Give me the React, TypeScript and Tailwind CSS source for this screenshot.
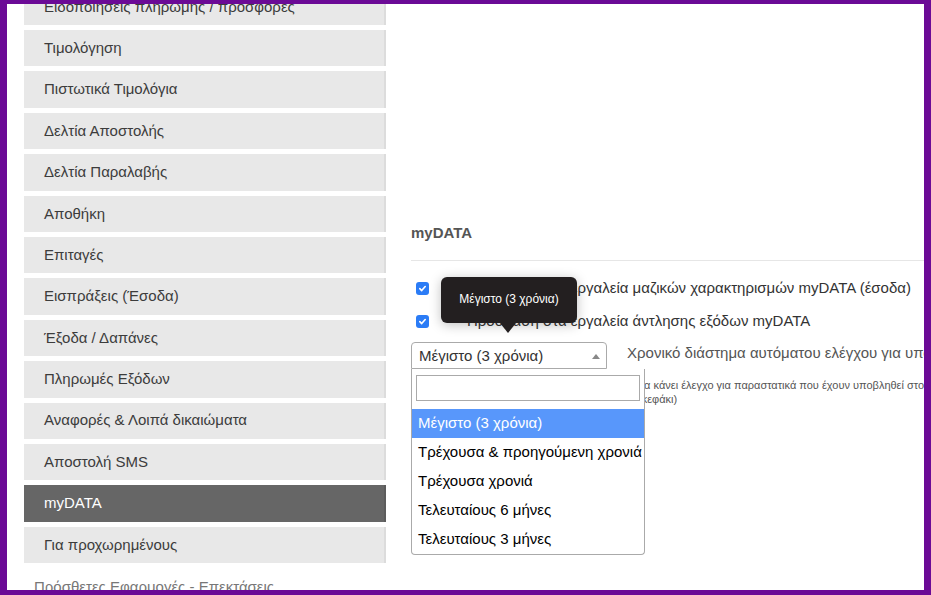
import React from "react";

const items = [
  "Ειδοποιήσεις πληρωμής / προσφορές",
  "Τιμολόγηση",
  "Πιστωτικά Τιμολόγια",
  "Δελτία Αποστολής",
  "Δελτία Παραλαβής",
  "Αποθήκη",
  "Επιταγές",
  "Εισπράξεις (Έσοδα)",
  "Έξοδα / Δαπάνες",
  "Πληρωμές Εξόδων",
  "Αναφορές & Λοιπά δικαιώματα",
  "Αποστολή SMS",
  "myDATA",
  "Για προχωρημένους",
];

const options = [
  "Μέγιστο (3 χρόνια)",
  "Τρέχουσα & προηγούμενη χρονιά",
  "Τρέχουσα χρονιά",
  "Τελευταίους 6 μήνες",
  "Τελευταίους 3 μήνες",
];

function Check() {
  return (
    <span className="flex h-[13px] w-[13px] shrink-0 items-center justify-center rounded-[3px] bg-[#2b7cf6]">
      <svg width="9" height="9" viewBox="0 0 10 10">
        <path d="M2 5.2 L4.1 7.3 L8 2.8" fill="none" stroke="white" strokeWidth="1.8" strokeLinecap="round" strokeLinejoin="round" />
      </svg>
    </span>
  );
}

export default function App() {
  return (
    <div
      className="box-border h-[595px] w-[931px] overflow-hidden border-solid border-[#6b0a96] border-t-[4px] border-b-[5px] border-l-[7px] border-r-[7px] bg-white"
      style={{ fontFamily: '"Liberation Sans", Arial, sans-serif' }}
    >
      <div className="flex h-full pl-[17px]">
        <div className="mt-[-15.4px] flex w-[362px] shrink-0 flex-col">
          {items.map((t) => {
            const active = t === "myDATA";
            return (
              <div
                key={t}
                className={
                  active
                    ? "mb-[5px] flex h-[36.4px] shrink-0 items-center border-r-2 border-[#5c5c5c] bg-[#666666] pl-[20px] text-[15px] text-white"
                    : "mb-[5px] flex h-[36.4px] shrink-0 items-center border-r-2 border-[#dcdcdc] bg-[#e8e8e8] pl-[20px] text-[15px] text-[#3c3c3c]"
                }
              >
                {t}
              </div>
            );
          })}
          <div className="mt-[9px] shrink-0 whitespace-nowrap pl-[10px] text-[15px] leading-[20px] text-[#777]">
            Πρόσθετες Εφαρμογές - Επεκτάσεις
          </div>
        </div>

        <div className="ml-[25px] min-w-0 flex-1 pt-[219px]">
          <div className="text-[15px] font-bold leading-[20px] text-[#555]">myDATA</div>
          <div className="mt-[17px] border-t border-[#e6e6e6]" />

          <div className="mt-[17px] flex h-[20px] items-center whitespace-nowrap">
            <span className="ml-[5px]"><Check /></span>
            <span className="ml-[38px] text-[15px] text-[#333]">
              Πρόσβαση στα εργαλεία μαζικών χαρακτηρισμών myDATA (έσοδα)
            </span>
          </div>
          <div className="mt-[13px] flex h-[20px] items-center whitespace-nowrap">
            <span className="ml-[5px]"><Check /></span>
            <span className="ml-[38px] text-[15px] text-[#333]">
              Πρόσβαση στα εργαλεία άντλησης εξόδων myDATA
            </span>
          </div>

          <div className="mt-[11px] flex items-start whitespace-nowrap">
            <div className="relative z-10 shrink-0">
              <div className="flex h-[27px] w-[196px] items-center justify-between rounded-t-[4px] border border-[#aaa] bg-white pl-[7px] pr-[6px] pt-[1px] text-[15px] text-[#333]">
                <span>Μέγιστο (3 χρόνια)</span>
                <span className="h-0 w-0 border-x-[4px] border-b-[5px] border-x-transparent border-b-[#888]" />
              </div>

              <div className="absolute left-0 top-full w-[234px] rounded-b-[4px] border border-t-0 border-[#aaa] bg-white">
                <div className="px-[4px] pb-[8px] pt-[6px]">
                  <div className="h-[26px] border border-[#aaa] bg-white" />
                </div>
                {options.map((o, i) => (
                  <div
                    key={o}
                    className={
                      i === 0
                        ? "flex h-[29px] items-center bg-[#5897fb] pl-[6px] text-[15px] text-white"
                        : "flex h-[29px] items-center pl-[6px] text-[15px] text-black"
                    }
                  >
                    {o}
                  </div>
                ))}
              </div>

              <div className="absolute left-[30px] top-[-65px] flex h-[46px] w-[136px] items-center justify-center rounded-[6px] bg-[#231f20] pb-[3px] text-[12px] text-white shadow-[0_2px_12px_rgba(0,0,0,0.25)]">
                Μέγιστο (3 χρόνια)
                <span className="absolute left-[59px] top-full h-0 w-0 border-x-[8px] border-t-[10px] border-x-transparent border-t-[#231f20]" />
              </div>
            </div>
            <div className="ml-[20px] flex flex-col">
              <div className="pt-[1px] text-[15px] leading-[20px] text-[#555]">
                Χρονικό διάστημα αυτόματου ελέγχου για υποβληθέντα παραστατικά
              </div>
              <div className="ml-[11px] mt-[15px] text-[11px] leading-[14px] text-[#555]">
                <div>θα κάνει έλεγχο για παραστατικά που έχουν υποβληθεί στο myDATA</div>
                <div>(κεφάκι)</div>
              </div>
            </div>
          </div>
        </div>
      </div>
    </div>
  );
}
